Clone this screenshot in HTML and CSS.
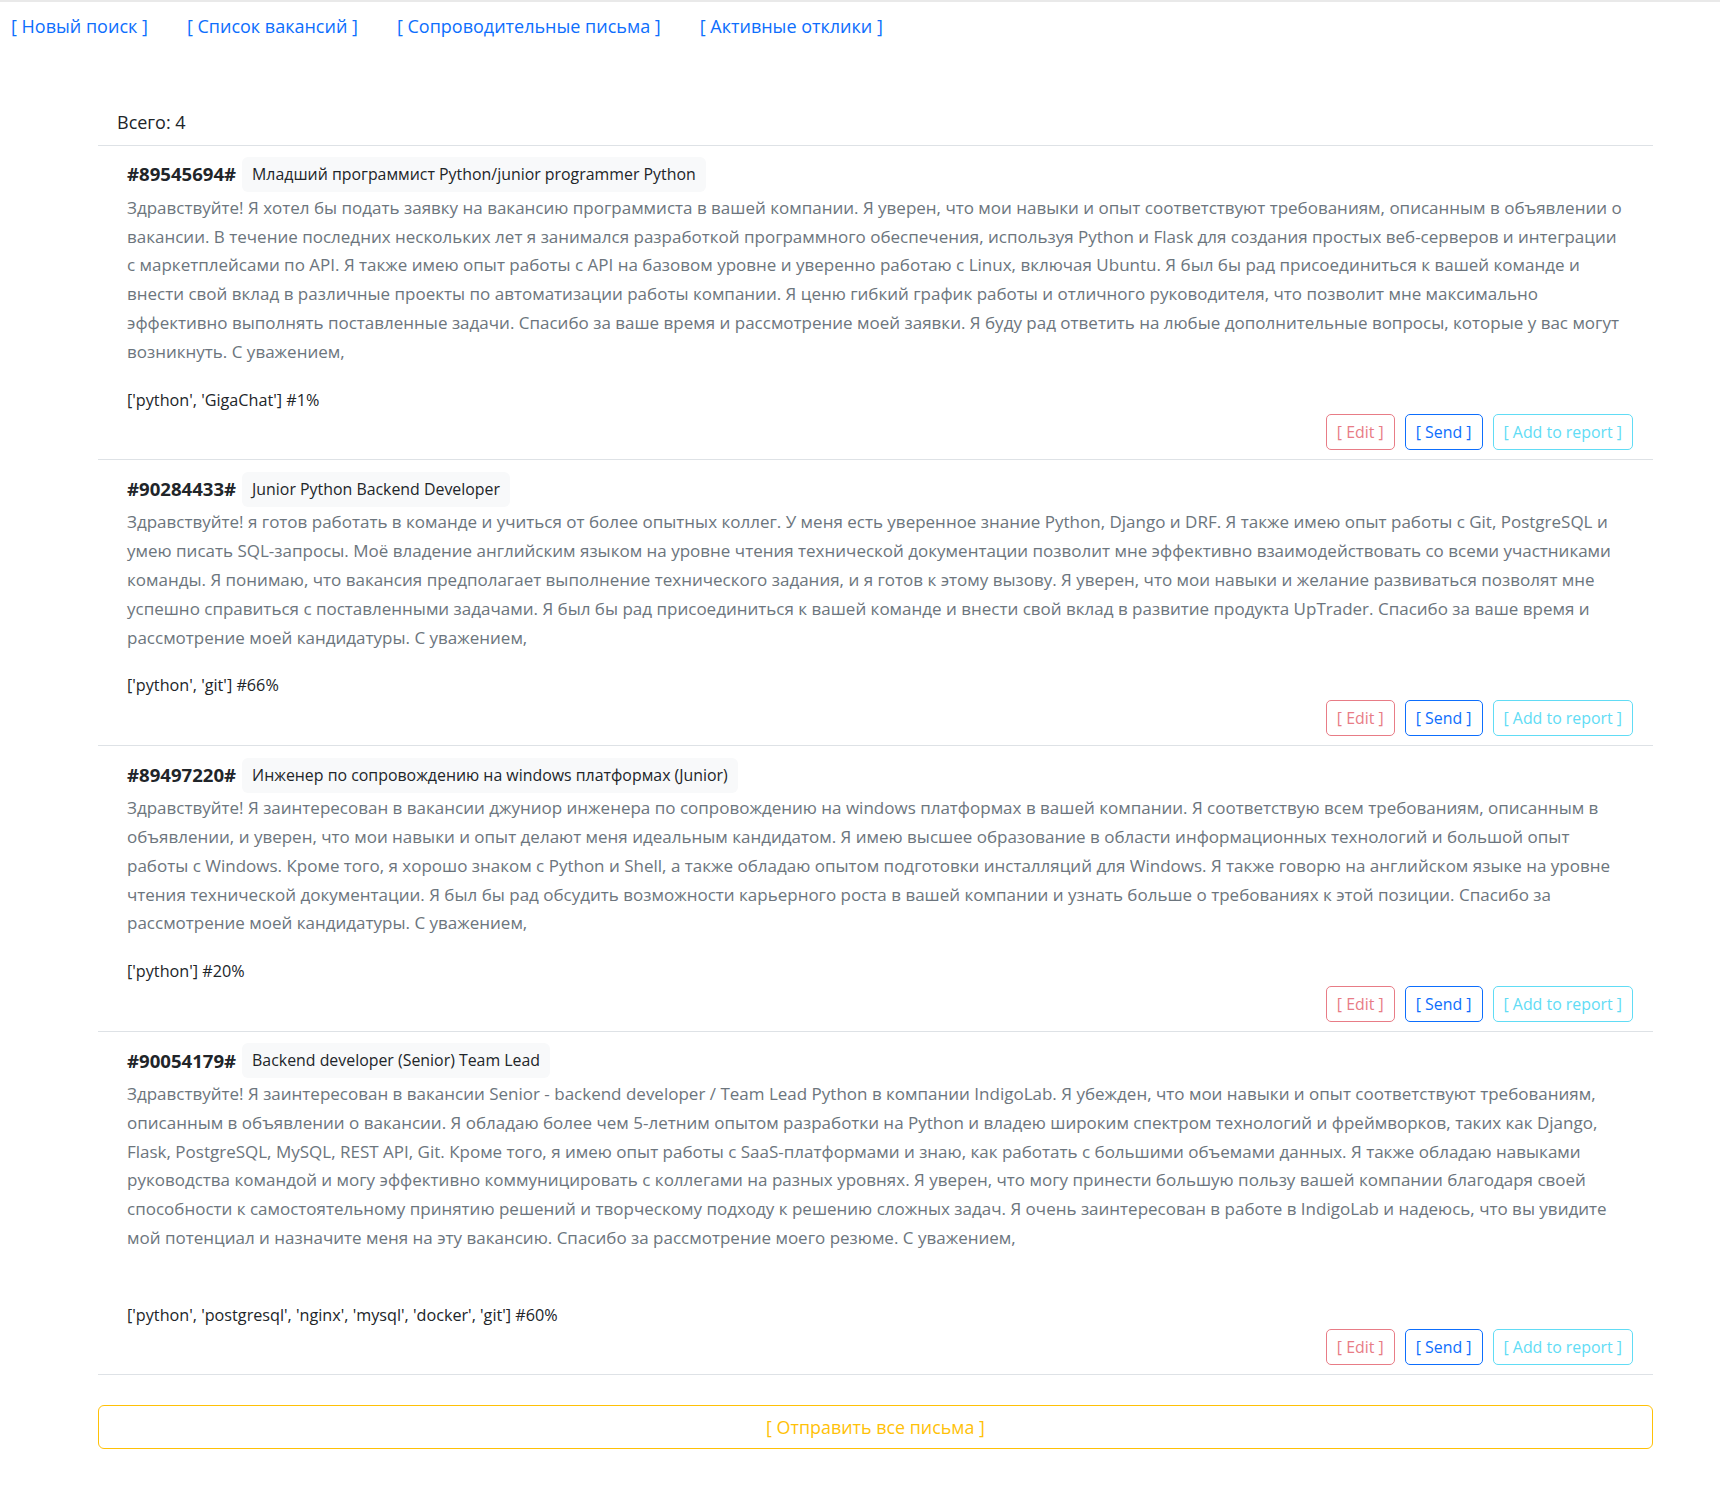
FILE: index.html
```html
<!DOCTYPE html>
<html lang="ru">
<head>
<meta charset="utf-8">
<title>Сопроводительные письма</title>
<link rel="stylesheet" href="styles.css">
</head>
<body>
<nav class="topnav">
  <a href="#" class="navlink">[ Новый поиск ]</a>
  <a href="#" class="navlink">[ Список вакансий ]</a>
  <a href="#" class="navlink">[ Сопроводительные письма ]</a>
  <a href="#" class="navlink">[ Активные отклики ]</a>
</nav>

<main class="container">
  <div class="total">Всего: 4</div>
  <ul class="letters">
    <li class="letter">
      <div class="letter-head"><span class="vid">#89545694#</span><span class="vname">Младший программист Python/junior programmer Python</span></div>
      <p class="letter-text">Здравствуйте! Я хотел бы подать заявку на вакансию программиста в вашей компании. Я уверен, что мои навыки и опыт соответствуют требованиям, описанным в объявлении о вакансии. В течение последних нескольких лет я занимался разработкой программного обеспечения, используя Python и Flask для создания простых веб-серверов и интеграции с маркетплейсами по API. Я также имею опыт работы с API на базовом уровне и уверенно работаю с Linux, включая Ubuntu. Я был бы рад присоединиться к вашей команде и внести свой вклад в различные проекты по автоматизации работы компании. Я ценю гибкий график работы и отличного руководителя, что позволит мне максимально эффективно выполнять поставленные задачи. Спасибо за ваше время и рассмотрение моей заявки. Я буду рад ответить на любые дополнительные вопросы, которые у вас могут возникнуть. С уважением,</p>
      <p class="skills">['python', 'GigaChat'] #1%</p>
      <div class="actions">
        <button class="btn btn-edit" disabled>[ Edit ]</button>
        <button class="btn btn-send">[ Send ]</button>
        <button class="btn btn-report" disabled>[ Add to report ]</button>
      </div>
    </li>
    <li class="letter">
      <div class="letter-head"><span class="vid">#90284433#</span><span class="vname">Junior Python Backend Developer</span></div>
      <p class="letter-text">Здравствуйте! я готов работать в команде и учиться от более опытных коллег. У меня есть уверенное знание Python, Django и DRF. Я также имею опыт работы с Git, PostgreSQL и умею писать SQL-запросы. Моё владение английским языком на уровне чтения технической документации позволит мне эффективно взаимодействовать со всеми участниками команды. Я понимаю, что вакансия предполагает выполнение технического задания, и я готов к этому вызову. Я уверен, что мои навыки и желание развиваться позволят мне успешно справиться с поставленными задачами. Я был бы рад присоединиться к вашей команде и внести свой вклад в развитие продукта UpTrader. Спасибо за ваше время и рассмотрение моей кандидатуры. С уважением,</p>
      <p class="skills">['python', 'git'] #66%</p>
      <div class="actions">
        <button class="btn btn-edit" disabled>[ Edit ]</button>
        <button class="btn btn-send">[ Send ]</button>
        <button class="btn btn-report" disabled>[ Add to report ]</button>
      </div>
    </li>
    <li class="letter">
      <div class="letter-head"><span class="vid">#89497220#</span><span class="vname">Инженер по сопровождению на windows платформах (Junior)</span></div>
      <p class="letter-text">Здравствуйте! Я заинтересован в вакансии джуниор инженера по сопровождению на windows платформах в вашей компании. Я соответствую всем требованиям, описанным в объявлении, и уверен, что мои навыки и опыт делают меня идеальным кандидатом. Я имею высшее образование в области информационных технологий и большой опыт работы с Windows. Кроме того, я хорошо знаком с Python и Shell, а также обладаю опытом подготовки инсталляций для Windows. Я также говорю на английском языке на уровне чтения технической документации. Я был бы рад обсудить возможности карьерного роста в вашей компании и узнать больше о требованиях к этой позиции. Спасибо за рассмотрение моей кандидатуры. С уважением,</p>
      <p class="skills">['python'] #20%</p>
      <div class="actions">
        <button class="btn btn-edit" disabled>[ Edit ]</button>
        <button class="btn btn-send">[ Send ]</button>
        <button class="btn btn-report" disabled>[ Add to report ]</button>
      </div>
    </li>
    <li class="letter">
      <div class="letter-head"><span class="vid">#90054179#</span><span class="vname">Backend developer (Senior) Team Lead</span></div>
      <p class="letter-text">Здравствуйте! Я заинтересован в вакансии Senior - backend developer / Team Lead Python в компании IndigoLab. Я убежден, что мои навыки и опыт соответствуют требованиям, описанным в объявлении о вакансии. Я обладаю более чем 5-летним опытом разработки на Python и владею широким спектром технологий и фреймворков, таких как Django, Flask, PostgreSQL, MySQL, REST API, Git. Кроме того, я имею опыт работы с SaaS-платформами и знаю, как работать с большими объемами данных. Я также обладаю навыками руководства командой и могу эффективно коммуницировать с коллегами на разных уровнях. Я уверен, что могу принести большую пользу вашей компании благодаря своей способности к самостоятельному принятию решений и творческому подходу к решению сложных задач. Я очень заинтересован в работе в IndigoLab и надеюсь, что вы увидите мой потенциал и назначите меня на эту вакансию. Спасибо за рассмотрение моего резюме. С уважением,<br><br></p>
      <p class="skills">['python', 'postgresql', 'nginx', 'mysql', 'docker', 'git'] #60%</p>
      <div class="actions">
        <button class="btn btn-edit" disabled>[ Edit ]</button>
        <button class="btn btn-send">[ Send ]</button>
        <button class="btn btn-report" disabled>[ Add to report ]</button>
      </div>
    </li>
  </ul>
  <button class="btn btn-send-all">[ Отправить все письма ]</button>
</main>
</body>
</html>
```

FILE: styles.css
```css
* { box-sizing: border-box; }

html, body {
  margin: 0;
  padding: 0;
  background: #fff;
}

body {
  font-family: "Open Sans", "Noto Sans", sans-serif;
  font-size: 17px;
  line-height: 28.8px;
  color: #212529;
  border-top: 2px solid #e9e9e9;
}

.topnav {
  display: flex;
  gap: 39px;
  padding: 10px 0 0 11px;
  height: 40px;
}

.navlink {
  color: #0d6efd;
  text-decoration: none;
  font-size: 18px;
  line-height: 28px;
}

.container {
  width: 1555px;
  margin: 66px 0 0 98px;
}

.total {
  padding-left: 19px;
  font-size: 18px;
  line-height: 28.8px;
  margin-bottom: 8px;
}

.letters {
  list-style: none;
  margin: 0;
  padding: 0;
  border-bottom: 1px solid #dee2e6;
}

.letter {
  border-top: 1px solid #dee2e6;
  padding: 10px 20px 9px 29px;
}

.letter-head {
  display: flex;
  align-items: center;
  gap: 6px;
  height: 38px;
}

.vid {
  font-weight: 700;
  font-size: 18.6px;
  color: #212529;
}

.vname {
  background: #f8f9fa;
  border-radius: 6px;
  padding: 3px 10px;
  font-size: 15.9px;
  color: #212529;
  line-height: 29px;
}

.letter-text {
  margin: 0 0 19px;
  color: #6c757d;
  max-width: 1497px;
}

.skills {
  margin: 0;
  font-size: 16.2px;
}

.actions {
  display: flex;
  justify-content: flex-end;
  gap: 10px;
}

.btn {
  font-family: inherit;
  background: #fff;
  border: 1px solid;
  border-radius: 5px;
  cursor: pointer;
}

.actions .btn {
  height: 36px;
  padding: 0 10px;
  font-size: 15.9px;
}

.btn-edit {
  color: #e87c86;
  border-color: #e87c86;
}

.btn-send {
  color: #0d6efd;
  border-color: #0d6efd;
}

.btn-report {
  color: #61dcf5;
  border-color: #61dcf5;
}

.btn-send-all {
  display: block;
  width: 100%;
  height: 44px;
  margin-top: 30px;
  color: #ffc107;
  border-color: #ffc107;
  border-radius: 6px;
  font-size: 17.9px;
}
```
